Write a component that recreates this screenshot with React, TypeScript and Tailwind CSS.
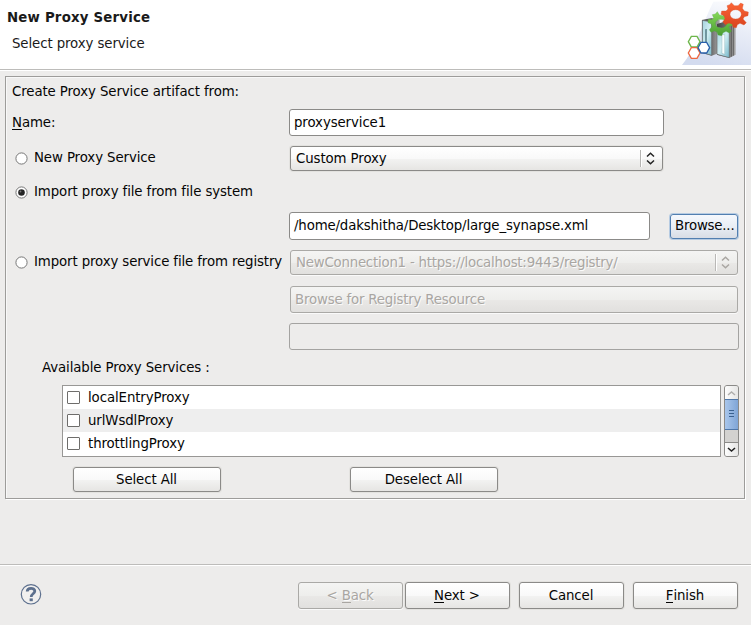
import type { ReactNode } from "react";

const EDGE = "rounded-[3px] border border-[#8b8a88]";
const FACE = "bg-[linear-gradient(#ffffff_0%,#f9f9f9_50%,#f2f2f1_54%,#e6e5e3_100%)] shadow-[0_0_0_1px_#e3e2df]";
const FACE_OFF =
  "border-[#aaa9a6] bg-[linear-gradient(#f4f4f3_0%,#eeeeec_50%,#e9e8e6_54%,#e1e0de_100%)] text-[#a9a6a2] shadow-[0_1px_0_#fafafa] [text-shadow:1px_1px_0_#fbfbfb]";

function Button({ className, children, disabled }: { className: string; children: ReactNode; disabled?: boolean }) {
  return (
    <button
      disabled={disabled}
      className={`flex shrink-0 items-center justify-center rounded-[3px] border pr-px ${disabled ? FACE_OFF : `border-[#8b8a88] ${FACE}`} ${className}`}
    >
      <span>{children}</span>
    </button>
  );
}

function Key({ children }: { children: string }) {
  return <span className="inline-block border-b border-current leading-[13px]">{children}</span>;
}

function Radio({ on }: { on?: boolean }) {
  return (
    <svg width="13" height="13" viewBox="0 0 13 13" className={`mr-[6px] shrink-0 ${on ? "" : "mt-px"}`}>
      <circle cx="6.5" cy="6.5" r="5.6" fill="#fff" stroke="#777" />
      {on && <circle cx="6.5" cy="6.5" r="3.3" fill="#252525" />}
      {on && <circle cx="5.5" cy="5.5" r="0.9" fill="#777" />}
    </svg>
  );
}

function Chevrons({ className, bar }: { className: string; bar: string }) {
  return (
    <span className={`ml-auto flex h-[17px] w-[22px] items-center border-l pl-[5px] shadow-[inset_1px_0_0_#fff] ${bar}`}>
      <svg width="9" height="13" viewBox="0 0 9 13" className={className} fill="none" stroke="currentColor" strokeWidth="1.5">
        <path d="M1 4.5 4.5 1.2 8 4.5M1 8.5 4.5 11.8 8 8.5" />
      </svg>
    </span>
  );
}

function ProxyArt() {
  return (
    <svg width="80" height="69" viewBox="0 0 240 207" className="shrink-0">
      <defs>
        <linearGradient id="sky" x1="0.4" y1="1" x2="0.7" y2="0">
          <stop offset="0" stopColor="#d3dbef" />
          <stop offset="0.6" stopColor="#e9edf7" />
          <stop offset="1" stopColor="#fbfcfe" />
        </linearGradient>
        <linearGradient id="glass" x1="0" y1="0" x2="1" y2="1">
          <stop offset="0" stopColor="#a4d3de" />
          <stop offset=".5" stopColor="#d0edf2" />
          <stop offset="1" stopColor="#75b7ca" />
        </linearGradient>
        <linearGradient id="steel" x1="0" x2="1">
          <stop offset="0" stopColor="#444" />
          <stop offset=".6" stopColor="#777" />
          <stop offset="1" stopColor="#aaa" />
        </linearGradient>
        <linearGradient id="red" x1="0" y1="0" x2="0" y2="1">
          <stop offset="0" stopColor="#fb6537" />
          <stop offset="1" stopColor="#d9431d" />
        </linearGradient>
        <linearGradient id="lime" x1="0" y1="0" x2="0" y2="1">
          <stop offset="0" stopColor="#86d95a" />
          <stop offset="1" stopColor="#4a9d32" />
        </linearGradient>
      </defs>
      <path d="M33 195C75 145 94 70 127 5L240 0V195Z" fill="url(#sky)" />
      <path d="M93 60 122 54 146 60V158L122 167 93 158Z" fill="url(#steel)" />
      <path d="M94 61 122 66V166L94 158Z" fill="url(#glass)" stroke="#666" strokeWidth="2" />
      <path d="M103 88 107 87V160L103 158Z" fill="#456d78" />
      <path d="M138 72 176 60 194 68V164L175 174 138 164Z" fill="url(#steel)" />
      <path d="M138 82 175 88V173L138 163Z" fill="url(#glass)" stroke="#666" strokeWidth="2" />
      <path d="M153 104H161V163L153 160Z" fill="#f8ffff" stroke="#7e9da5" />
      <path d="M181 76V170M187 72V167" stroke="#444" strokeWidth="2" />
      <path
        fillRule="evenodd"
        fill="url(#lime)"
        stroke="#52a33b"
        d="M139 35 145 45 155 47 164 39 171 47 170 58 178 65 187 68 184 77 175 78 174 84 182 93 175 99 165 94 156 98 152 107 141 105 138 96 130 93 120 97 115 89 123 80 121 72 111 68 112 58 123 59 128 53 124 44 133 42ZM133 71a17 13 0 1 0 34 0 17 13 0 1 0-34 0Z"
      />
      <path
        fillRule="evenodd"
        fill="url(#red)"
        stroke="#d54b25"
        d="M181 8 190 17 201 17 209 9 217 13 214 25 220 33 232 36 231 47 220 50 216 57 226 68 219 75 207 70 199 74 196 83 186 82 184 73 174 69 163 74 155 66 162 56 159 47 150 43 152 33 165 33 171 27 168 17 176 14ZM177 43a17 14 0 1 0 34 0 17 14 0 1 0-34 0Z"
      />
      <g fill="#fff" strokeWidth="4">
        <path d="M61 109H78L87 125 78 141H61L52 125Z" stroke="#6db64a" />
        <path d="M61 143H78L87 159 78 175H61L52 159Z" stroke="#ed6841" />
        <path d="M90 127H107L116 143 107 159H90L81 143Z" stroke="#295fa9" />
      </g>
    </svg>
  );
}

const SERVICES = ["localEntryProxy", "urlWsdlProxy", "throttlingProxy"];

export default function App() {
  return (
    <div className="flex h-[625px] w-[751px] flex-col overflow-hidden bg-[#edeceb] font-['DejaVu_Sans',sans-serif] text-[13.33px] leading-[18px] tracking-[-0.1px] whitespace-nowrap text-[#050505]">
      <header className="flex h-[71px] shrink-0 justify-between border-b border-white bg-white shadow-[inset_0_-1px_0_#bdbcba]">
        <div className="pt-[9px] pl-[7px]">
          <h1 className="font-bold tracking-[0.19px] text-[#1a1a1a]">New Proxy Service</h1>
          <p className="mt-[8px] pl-[5px] text-[#1a1a1a]">Select proxy service</p>
        </div>
        <ProxyArt />
      </header>

      <main className="mt-[5px] ml-[5px] flex h-[423px] w-[740px] shrink-0 flex-col border border-[#9d9c9a] shadow-[1px_1px_0_#fff,inset_1px_1px_0_#f8f8f8]">
        <p className="mt-[6px] ml-[6px]">Create Proxy Service artifact from:</p>

        <div className="mt-[8px] flex h-[27px] items-center">
          <label className="w-[283px] pl-[6px]"><Key>N</Key>ame:</label>
          <div className={`flex h-[27px] w-[375px] items-center bg-white pl-[4px] ${EDGE} border-[#6e6d6b]`}>proxyservice1</div>
        </div>

        <div className="mt-[10px] flex h-[25px] items-center">
          <label className="flex w-[284px] items-center pb-[2px] pl-[9px]"><Radio />New Proxy Service</label>
          <div className={`flex h-[25px] w-[373px] items-center pl-[5px] ${EDGE} ${FACE}`}>
            Custom Proxy
            <Chevrons className="text-[#222]" bar="border-[#b5b4b2]" />
          </div>
        </div>

        <label className="mt-[12px] flex h-[18px] items-center pl-[9px]"><Radio on />Import proxy file from file system</label>

        <div className="mt-[11px] ml-[283px] flex h-[28px] items-center">
          <div className={`flex h-[28px] w-[361px] items-center bg-white pl-[4px] tracking-[-0.15px] ${EDGE} border-[#6e6d6b]`}>
            /home/dakshitha/Desktop/large_synapse.xml
          </div>
          <button className="ml-[20px] flex h-[25px] w-[68px] items-center rounded-[3px] border border-[#527fb0] bg-[linear-gradient(#f5f8fd,#e9eef5_50%,#d9dde5)] pl-[4px] tracking-[-0.2px] shadow-[0_0_0_1px_#b6cbe2]">
            Browse...
          </button>
        </div>

        <div className="mt-[10px] flex h-[25px] items-center">
          <label className="flex w-[284px] items-center pb-[2px] pl-[9px] tracking-[-0.12px]"><Radio />Import proxy service file from registry</label>
          <div className={`flex h-[25px] w-[448px] items-center rounded-[3px] border pl-[5px] tracking-[-0.22px] ${FACE_OFF}`}>
            NewConnection1 - https://localhost:9443/registry/
            <Chevrons className="text-[#a9a6a2]" bar="border-[#b9b8b6]" />
          </div>
        </div>

        <button disabled className={`mt-[11px] ml-[284px] flex h-[27px] w-[448px] items-center rounded-[3px] border pl-[4px] tracking-[-0.19px] ${FACE_OFF}`}>
          Browse for Registry Resource
        </button>
        <div className="mt-[10px] ml-[283px] h-[27px] w-[450px] rounded-[3px] border border-[#a4a3a1]" />

        <p className="mt-[9px] ml-[36px]">Available Proxy Services :</p>

        <div className="mt-[8px] ml-[56px] flex h-[72px]">
          <ul className="w-[659px] border border-[#989795] bg-white">
            {SERVICES.map((name) => (
              <li key={name} className="flex h-[23px] items-center pl-[4px] even:bg-[#eeeeee]">
                <span className="mr-[8px] size-[13px] rounded-[1px] border border-[#6e6d6b] bg-white" />
                {name}
              </li>
            ))}
          </ul>
          <div className="ml-[3px] flex w-[15px] flex-col overflow-hidden rounded-[3px] border border-[#8b8a88] bg-[#d3d2d0]">
            <span className="flex h-[13px] items-center justify-center bg-[linear-gradient(90deg,#fdfdfd,#e6e6e5)]">
              <svg width="9" height="6" fill="none" stroke="#b0afad" strokeWidth="1.5"><path d="M1 5 4.5 2 8 5" /></svg>
            </span>
            <span className="-mx-px flex h-[31px] flex-col items-center justify-center gap-[2px] border border-[#4f77a9] bg-[linear-gradient(90deg,#a9c6eb,#7fa5d6)] pb-[2px]">
              <i className="h-px w-[5px] bg-[#3a618f]" />
              <i className="h-px w-[5px] bg-[#3a618f]" />
              <i className="h-px w-[5px] bg-[#3a618f]" />
            </span>
            <span className="mt-auto flex h-[14px] items-center justify-center border-t border-[#8b8a88] bg-[linear-gradient(90deg,#fdfdfd,#e6e6e5)]">
              <svg width="9" height="6" fill="none" stroke="#222" strokeWidth="1.6"><path d="M1 1 4.5 4 8 1" /></svg>
            </span>
          </div>
        </div>

        <div className="mt-[10px] ml-[67px] flex gap-[129px]">
          <Button className="h-[25px] w-[148px]">Select All</Button>
          <Button className="h-[25px] w-[148px]">Deselect All</Button>
        </div>
      </main>

      <footer className="mt-[65px] flex h-[61px] shrink-0 items-start border-t border-[#bdbcba] pt-[17px] shadow-[inset_0_1px_0_#fff]">
        <svg width="22" height="22" viewBox="0 0 22 22" className="mt-px ml-[20px] shrink-0" fill="none" stroke="#5d708e">
          <circle cx="11" cy="11.3" r="9.7" fill="#f1f0ef" strokeWidth="1.2" />
          <path d="M7.2 8.6C7.2 4.3 14.8 4.3 14.8 8.1 14.8 10.8 11.2 10.8 11.2 14" strokeWidth="2.8" />
          <path d="M11.2 15.4V18.2" strokeWidth="3.2" />
        </svg>
        <Button disabled className="ml-[256px] h-[27px] w-[105px]">&lt; <Key>B</Key>ack</Button>
        <Button className="ml-[2px] h-[27px] w-[105px]"><Key>N</Key>ext &gt;</Button>
        <Button className="ml-[9px] h-[27px] w-[105px]">Cancel</Button>
        <Button className="ml-[9px] h-[27px] w-[105px]"><Key>F</Key>inish</Button>
      </footer>
    </div>
  );
}
